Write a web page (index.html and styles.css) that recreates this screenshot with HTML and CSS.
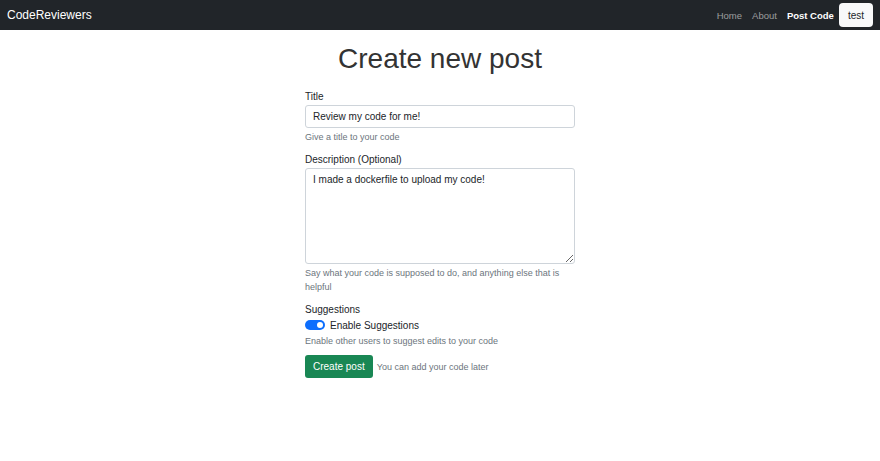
FILE: index.html
```html
<!DOCTYPE html>
<html lang="en">
<head>
    <meta charset="UTF-8">
    <meta name="viewport" content="width=device-width, initial-scale=1.0">
    <title>CodeReviewers - Create new post</title>
    <link rel="stylesheet" href="styles.css">
</head>
<body>
    <nav class="navbar">
        <a class="brand" href="#">CodeReviewers</a>
        <div class="nav-links">
            <a class="nav-link" href="#">Home</a>
            <a class="nav-link" href="#">About</a>
            <a class="nav-link active" href="#">Post Code</a>
            <button class="user-button">test</button>
        </div>
    </nav>

    <main class="page">
        <h1 class="page-title">Create new post</h1>
        <form class="post-form">
            <div class="field">
                <label class="form-label" for="title">Title</label>
                <input class="form-control" type="text" id="title" value="Review my code for me!">
                <div class="form-text">Give a title to your code</div>
            </div>

            <div class="field">
                <label class="form-label" for="description">Description (Optional)</label>
                <textarea class="form-control description" id="description">I made a dockerfile to upload my code!</textarea>
                <div class="form-text">Say what your code is supposed to do, and anything else that is helpful</div>
            </div>

            <div class="field">
                <div class="form-label">Suggestions</div>
                <label class="switch-row">
                    <span class="switch"><span class="knob"></span></span>
                    Enable Suggestions
                </label>
                <div class="form-text">Enable other users to suggest edits to your code</div>
            </div>

            <div class="actions">
                <button class="btn-submit" type="button">Create post</button>
                <span class="form-text inline">You can add your code later</span>
            </div>
        </form>
    </main>
</body>
</html>
```

FILE: styles.css
```css
body {
    margin: 0;
    font-family: "Liberation Sans", Arial, sans-serif;
    font-size: 10px;
    color: #212529;
    background-color: #fff;
}
a {
    text-decoration: none;
}
.navbar {
    height: 30px;
    background-color: #212529;
    display: flex;
    align-items: center;
    justify-content: space-between;
    padding: 0 7px;
}
.brand {
    color: #fff;
    font-size: 12px;
}
.nav-links {
    display: flex;
    align-items: center;
    gap: 10px;
}
.nav-link {
    color: rgba(255, 255, 255, 0.55);
    font-size: 9.5px;
}
.nav-link.active {
    color: #fff;
    font-weight: bold;
}
.user-button {
    font-family: inherit;
    font-size: 10px;
    color: #212529;
    background-color: #f8f9fa;
    border: none;
    border-radius: 4px;
    height: 24px;
    padding: 0 9px;
    margin-left: -5px;
}
.page {
    display: flex;
    flex-direction: column;
    align-items: center;
}
.page-title {
    font-size: 28px;
    font-weight: normal;
    line-height: 34px;
    margin: 12px 0 14px;
    color: #333;
}
.post-form {
    width: 270px;
}
.field {
    margin-bottom: 9px;
}
.form-label {
    display: block;
    font-size: 10px;
    line-height: 14px;
    margin-bottom: 1px;
}
.form-control {
    display: block;
    box-sizing: border-box;
    width: 100%;
    font-family: inherit;
    font-size: 10px;
    color: #212529;
    border: 1px solid #ced4da;
    border-radius: 3px;
    padding: 4px 7px;
    margin: 0;
}
input.form-control {
    height: 23px;
}
.description {
    height: 96px;
    resize: vertical;
    padding-top: 5px;
}
.form-text {
    font-size: 9px;
    color: #6c757d;
    line-height: 14px;
    margin-top: 2px;
}
.switch-row {
    display: flex;
    align-items: center;
    gap: 5px;
    font-size: 10px;
    height: 14px;
}
.switch {
    width: 20px;
    height: 10px;
    border-radius: 5px;
    background-color: #0d6efd;
    display: flex;
    align-items: center;
    justify-content: flex-end;
    padding: 0 2px;
    box-sizing: border-box;
}
.knob {
    width: 6px;
    height: 6px;
    border-radius: 50%;
    background-color: #fff;
}
.actions {
    display: flex;
    align-items: center;
    gap: 4px;
    margin-top: -2px;
}
.btn-submit {
    font-family: inherit;
    font-size: 10px;
    color: #fff;
    background-color: #198754;
    border: none;
    border-radius: 3px;
    height: 23px;
    padding: 0 8px;
}
.form-text.inline {
    margin-top: 0;
}
```
